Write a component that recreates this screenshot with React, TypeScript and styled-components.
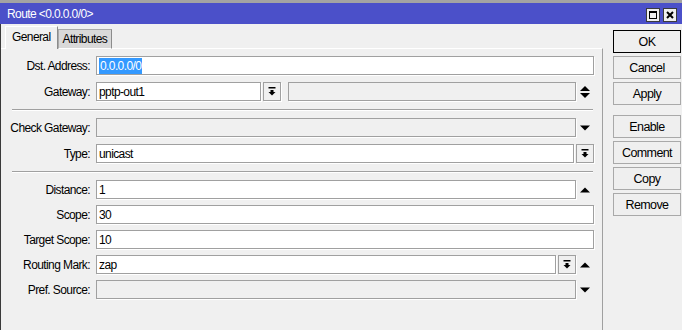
import styled, { createGlobalStyle } from 'styled-components';

const Global = createGlobalStyle`
  html, body {
    margin: 0;
    padding: 0;
    background: #f0f0f0;
  }
  body {
    font-family: "Liberation Sans", Arial, sans-serif;
    font-size: 12px;
    letter-spacing: -0.6px;
    color: #000;
  }
`;

const Window = styled.div`
  width: 682px;
  height: 330px;
  display: flex;
  flex-direction: column;
  background: #f0f0f0;
  overflow: hidden;
`;

const TitleBar = styled.div`
  height: 21px;
  border-top: 3px solid #a3a3a3;
  background: #4b50c9;
  color: #fff;
  display: flex;
  align-items: center;
  padding: 0 5px 0 7px;
  flex-shrink: 0;
`;

const Title = styled.div`
  flex: 1;
  padding-top: 1px;
`;

const TitleButtons = styled.div`
  display: flex;
  gap: 3px;
  margin-top: 2px;
`;

const TitleButton = styled.div`
  width: 12px;
  height: 12px;
  border: 1px solid #3c3c3c;
  background: #f0f0f0;
  display: flex;
  align-items: center;
  justify-content: center;
`;

const Body = styled.div`
  flex: 1;
  display: flex;
  border-left: 1px solid #3a3a3a;
`;

const TabArea = styled.div`
  width: 602px;
  display: flex;
  flex-direction: column;
`;

const TabStrip = styled.div`
  height: 25px;
  display: flex;
  align-items: flex-end;
  padding-left: 4px;
  position: relative;
  z-index: 1;
  margin-bottom: -1px;
`;

const Tab = styled.div<{ $active?: boolean }>`
  box-sizing: border-box;
  height: ${(p) => (p.$active ? '23px' : '20px')};
  padding: 0 ${(p) => (p.$active ? '6px' : '4px')};
  display: flex;
  align-items: center;
  background: ${(p) => (p.$active ? '#f0f0f0' : '#d9d9d9')};
  border: 1px solid ${(p) => (p.$active ? '#ffffff' : '#a9a9a9')};
  border-right-color: #8c8c8c;
  border-bottom: ${(p) => (p.$active ? 'none' : '1px solid #fff')};
  padding-bottom: ${(p) => (p.$active ? '3px' : '0')};
`;

const Pane = styled.div`
  flex: 1;
  border-top: 1px solid #ffffff;
  border-right: 1px solid #a0a0a0;
  padding: 7px 8px 0 8px;
  display: flex;
  flex-direction: column;
`;

const Group = styled.div<{ $gap: number }>`
  display: flex;
  flex-direction: column;
  gap: ${(p) => p.$gap}px;
`;

const Separator = styled.div`
  height: 1px;
  background: #a0a0a0;
  border-bottom: 1px solid #ffffff;
  margin: 8px 1px 7px 3px;
`;

const Row = styled.div`
  height: 19px;
  display: flex;
  align-items: center;
`;

const Label = styled.div`
  width: 81px;
  text-align: right;
  margin-right: 6px;
  white-space: nowrap;
  flex-shrink: 0;
`;

const Input = styled.div<{ $disabled?: boolean; $width?: number }>`
  box-sizing: border-box;
  height: 19px;
  ${(p) => (p.$width ? `width: ${p.$width}px; flex-shrink: 0;` : 'flex: 1;')}
  border: 1px solid #a0a0a0;
  box-shadow: 1px 1px 0 #ffffff;
  background: ${(p) => (p.$disabled ? '#f0f0f0' : '#ffffff')};
  display: flex;
  align-items: center;
  padding-left: 2px;
  white-space: nowrap;
  overflow: hidden;
`;

const Selected = styled.span`
  background: #3399ff;
  color: #fff;
  line-height: 16px;
  padding: 0 1px;
`;

const DropButton = styled.div`
  box-sizing: border-box;
  width: 18px;
  height: 19px;
  margin-left: 2px;
  border: 1px solid #a0a0a0;
  box-shadow: 1px 1px 0 #ffffff;
  background: #f0f0f0;
  display: flex;
  align-items: center;
  justify-content: center;
  flex-shrink: 0;
`;

const IconSlot = styled.div`
  width: 18px;
  height: 19px;
  display: flex;
  align-items: center;
  justify-content: center;
  flex-shrink: 0;
`;

const Spacer = styled.div<{ $w: number }>`
  width: ${(p) => p.$w}px;
  flex-shrink: 0;
`;

const ButtonColumn = styled.div`
  flex: 1;
  padding: 6px 0 0 10px;
  display: flex;
  flex-direction: column;
`;

const ButtonGroup = styled.div`
  display: flex;
  flex-direction: column;
  gap: 3px;
  & + & {
    margin-top: 10px;
  }
`;

const Button = styled.div<{ $default?: boolean }>`
  box-sizing: border-box;
  width: 68px;
  height: 23px;
  border: 1px solid ${(p) => (p.$default ? '#000' : '#a9a9a9')};
  background: #efefef;
  display: flex;
  align-items: center;
  justify-content: center;
  font-size: 12.5px;
`;

const DropIcon = () => (
  <svg width="8" height="9" viewBox="0 0 8 9">
    <rect x="0.5" y="0" width="7" height="1.5" fill="#000" />
    <rect x="2.5" y="3" width="3" height="2" fill="#000" />
    <polygon points="0.5,5 7.5,5 4,8.5" fill="#000" />
  </svg>
);

const UpIcon = () => (
  <svg width="10" height="6" viewBox="0 0 10 6">
    <polygon points="0,5.5 10,5.5 5,0.5" fill="#000" />
  </svg>
);

const DownIcon = () => (
  <svg width="10" height="6" viewBox="0 0 10 6">
    <polygon points="0,0.5 10,0.5 5,5.5" fill="#000" />
  </svg>
);

const SpinIcon = () => (
  <svg width="10" height="12" viewBox="0 0 10 12">
    <polygon points="0,5 10,5 5,0" fill="#000" />
    <polygon points="0,7 10,7 5,12" fill="#000" />
  </svg>
);

const App = () => {
  return (
    <Window>
      <Global />
      <TitleBar>
        <Title>Route &lt;0.0.0.0/0&gt;</Title>
        <TitleButtons>
          <TitleButton>
            <svg width="8" height="8" viewBox="0 0 8 8">
              <rect x="0.5" y="0.5" width="7" height="7" fill="none" stroke="#000" />
              <rect x="0" y="0" width="8" height="2" fill="#000" />
            </svg>
          </TitleButton>
          <TitleButton>
            <svg width="8" height="8" viewBox="0 0 8 8">
              <path d="M1 1 L7 7 M7 1 L1 7" stroke="#000" strokeWidth="2" />
            </svg>
          </TitleButton>
        </TitleButtons>
      </TitleBar>
      <Body>
        <TabArea>
          <TabStrip>
            <Tab $active>General</Tab>
            <Tab>Attributes</Tab>
          </TabStrip>
          <Pane>
            <Group $gap={7}>
              <Row>
                <Label>Dst. Address:</Label>
                <Input>
                  <Selected>0.0.0.0/0</Selected>
                </Input>
              </Row>
              <Row>
                <Label>Gateway:</Label>
                <Input $width={165}>pptp-out1</Input>
                <DropButton>
                  <DropIcon />
                </DropButton>
                <Spacer $w={7} />
                <Input $disabled />
                <IconSlot>
                  <SpinIcon />
                </IconSlot>
              </Row>
            </Group>
            <Separator />
            <Group $gap={7}>
              <Row>
                <Label>Check Gateway:</Label>
                <Input $disabled />
                <IconSlot>
                  <DownIcon />
                </IconSlot>
              </Row>
              <Row>
                <Label>Type:</Label>
                <Input>unicast</Input>
                <DropButton>
                  <DropIcon />
                </DropButton>
              </Row>
            </Group>
            <Separator />
            <Group $gap={6}>
              <Row>
                <Label>Distance:</Label>
                <Input>1</Input>
                <IconSlot>
                  <UpIcon />
                </IconSlot>
              </Row>
              <Row>
                <Label>Scope:</Label>
                <Input>30</Input>
              </Row>
              <Row>
                <Label>Target Scope:</Label>
                <Input>10</Input>
              </Row>
              <Row>
                <Label>Routing Mark:</Label>
                <Input>zap</Input>
                <DropButton>
                  <DropIcon />
                </DropButton>
                <IconSlot>
                  <UpIcon />
                </IconSlot>
              </Row>
              <Row>
                <Label>Pref. Source:</Label>
                <Input $disabled />
                <IconSlot>
                  <DownIcon />
                </IconSlot>
              </Row>
            </Group>
          </Pane>
        </TabArea>
        <ButtonColumn>
          <ButtonGroup>
            <Button $default>OK</Button>
            <Button>Cancel</Button>
            <Button>Apply</Button>
          </ButtonGroup>
          <ButtonGroup>
            <Button>Enable</Button>
            <Button>Comment</Button>
            <Button>Copy</Button>
            <Button>Remove</Button>
          </ButtonGroup>
        </ButtonColumn>
      </Body>
    </Window>
  );
};

export default App;
